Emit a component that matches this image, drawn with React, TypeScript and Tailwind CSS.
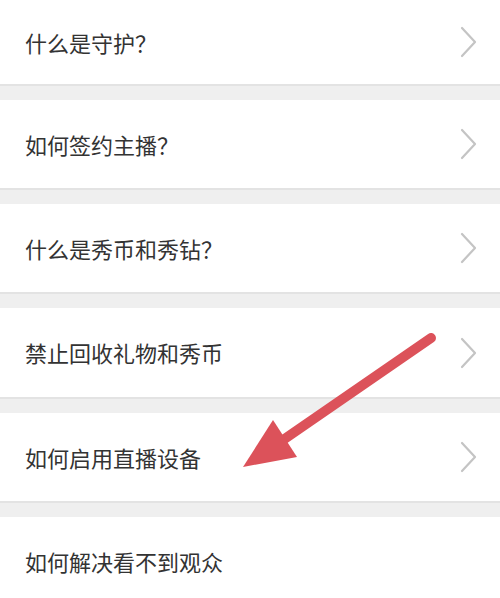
const items = [
  { label: "什么是守护？", h: "h-[84px]", arrow: true },
  { label: "如何签约主播？", h: "h-[88px]", arrow: true },
  { label: "什么是秀币和秀钻？", h: "h-[88px]", arrow: true },
  { label: "禁止回收礼物和秀币", h: "h-[89px]", arrow: true },
  { label: "如何启用直播设备", h: "h-[88px]", arrow: true },
  { label: "如何解决看不到观众", h: "h-[88px]", arrow: false },
];

const Chevron = () => (
  <svg width="18" height="32" viewBox="0 0 18 32" fill="none">
    <path d="M2 2 L15 16 L2 30" stroke="#c4c4c4" strokeWidth="2.2" strokeLinecap="round" strokeLinejoin="round" />
  </svg>
);

const App = () => {
  return (
    <div
      className="relative w-[500px] h-[598px] overflow-hidden bg-white"
      style={{ fontFamily: '"Noto Sans CJK SC", "Noto Sans", sans-serif' }}
    >
      <div className="flex flex-col">
        {items.map((item, i) => (
          <div key={i} className="flex flex-col">
            <div className={`${item.h} flex items-center justify-between pl-[25px] pr-[22px] bg-white`}>
              <span className="text-[22px] text-[#333333]">{item.label}</span>
              {item.arrow && <Chevron />}
            </div>
            {i < items.length - 1 && (
              <div className="h-[16px] bg-[#efefef] border-t-[2px] border-[#e3e3e3]" />
            )}
          </div>
        ))}
      </div>

      <svg className="absolute left-0 top-0" width="500" height="598" viewBox="0 0 500 598">
        <line x1="431" y1="338" x2="283" y2="440" stroke="#dc525a" strokeWidth="10" strokeLinecap="round" />
        <polygon points="243,467 273,420 297,457" fill="#dc525a" />
      </svg>
    </div>
  );
};

export default App;
